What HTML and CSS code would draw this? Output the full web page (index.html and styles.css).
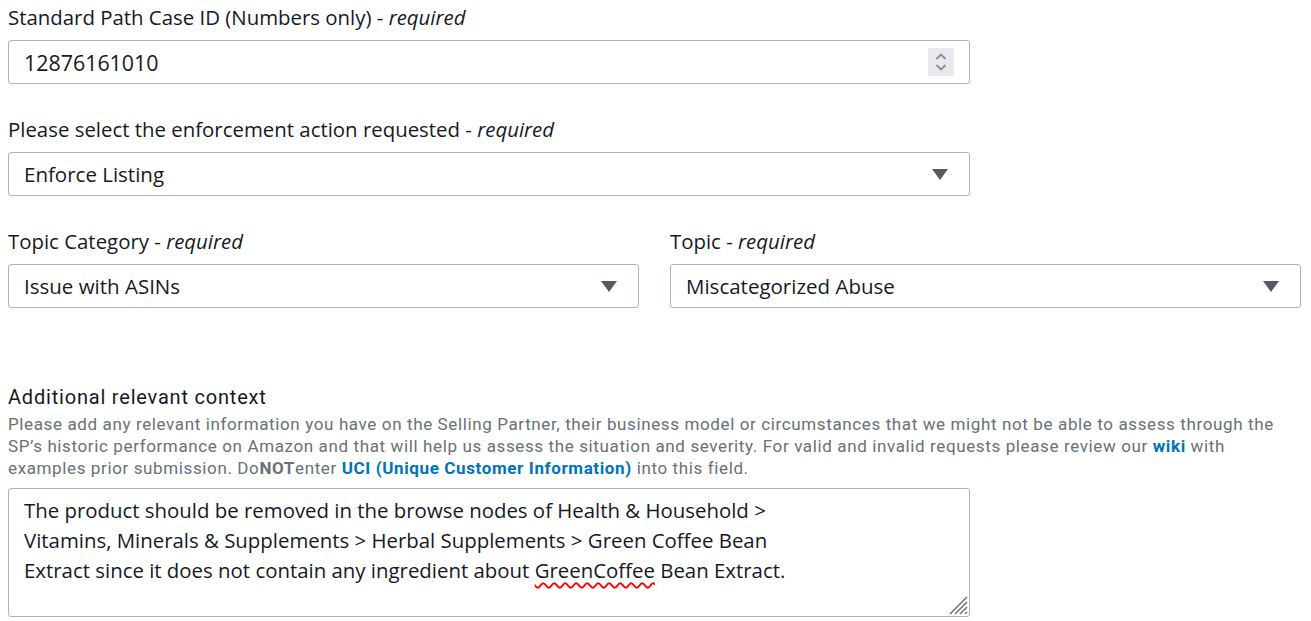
FILE: index.html
```html
<!DOCTYPE html>
<html lang="en">
<head>
<meta charset="utf-8">
<title>Enforcement request</title>
<link rel="stylesheet" href="styles.css">
</head>
<body>
<form class="form">
  <div class="field field-narrow">
    <label class="label">Standard Path Case ID (Numbers only) - <em>required</em></label>
    <div class="control">
      <span class="value value-number">12876161010</span>
      <span class="spinner">
        <svg width="14" height="22" viewBox="0 0 14 22"><path d="M2.5 8 L7 3.5 L11.5 8" fill="none" stroke="#8d8a99" stroke-width="1.8"/><path d="M2.5 14 L7 18.5 L11.5 14" fill="none" stroke="#8d8a99" stroke-width="1.8"/></svg>
      </span>
    </div>
  </div>

  <div class="field field-narrow">
    <label class="label">Please select the enforcement action requested - <em>required</em></label>
    <div class="control">
      <span class="value">Enforce Listing</span>
      <span class="caret"></span>
    </div>
  </div>

  <div class="row">
    <div class="field">
      <label class="label">Topic Category - <em>required</em></label>
      <div class="control">
        <span class="value">Issue with ASINs</span>
        <span class="caret"></span>
      </div>
    </div>
    <div class="field">
      <label class="label">Topic - <em>required</em></label>
      <div class="control">
        <span class="value">Miscategorized Abuse</span>
        <span class="caret"></span>
      </div>
    </div>
  </div>

  <div class="field context">
    <label class="label label-ember">Additional relevant context</label>
    <p class="hint">Please add any relevant information you have on the Selling Partner, their business model or circumstances that we might not be able to assess through the<br>SP’s historic performance on Amazon and that will help us assess the situation and severity. For valid and invalid requests please review our <a href="#">wiki</a> with<br>examples prior submission. Do<b>NOT</b>enter <a href="#">UCI (Unique Customer Information)</a> into this field.</p>
    <div class="textarea">
      <p>The product should be removed in the browse nodes of Health &amp; Household &gt;<br>Vitamins, Minerals &amp; Supplements &gt; Herbal Supplements &gt; Green Coffee Bean<br>Extract since it does not contain any ingredient about <span class="misspelled">GreenCoffee</span> Bean Extract.</p>
      <svg class="grip" width="22" height="22" viewBox="0 0 22 22"><path d="M21 4 L4 21 M21 9 L9 21 M21 14 L14 21 M21 19 L19 21" stroke="#6f6f6f" stroke-width="1.5"/></svg>
    </div>
  </div>
</form>
</body>
</html>
```

FILE: styles.css
```css
* { box-sizing: border-box; }

body {
  margin: 0;
  padding: 4px 8px 0 8px;
  background: #ffffff;
  color: #16191f;
  font-family: "Open Sans", "Noto Sans", sans-serif;
}

.form {
  display: flex;
  flex-direction: column;
  width: 1293px;
}

.field {
  display: flex;
  flex-direction: column;
}

.field-narrow {
  width: 962px;
  margin-bottom: 32px;
}

.label {
  font-size: 20.4px;
  line-height: 26px;
  margin-bottom: 10px;
  color: #16191f;
  white-space: nowrap;
}

.label em { font-style: italic; }

.control {
  height: 44px;
  border: 1px solid #aab7b8;
  border-radius: 3px;
  display: flex;
  align-items: center;
  justify-content: space-between;
  padding: 0 18px 0 15px;
  font-size: 20.5px;
}

.value { color: #16191f; }

.value-number { font-size: 21.4px; }

.spinner {
  width: 26px;
  height: 28px;
  background: #e9e8ed;
  display: flex;
  align-items: center;
  justify-content: center;
  margin-right: -3px;
}

.caret {
  width: 0;
  height: 0;
  border-left: 8px solid transparent;
  border-right: 8px solid transparent;
  border-top: 11px solid #545b64;
  margin-right: 3px;
}

.row {
  display: grid;
  grid-template-columns: 631px 631px;
  column-gap: 31px;
  margin-bottom: 76px;
}

.context { width: 1293px; }

.label-ember {
  font-family: Roboto, "Liberation Sans", sans-serif;
  font-size: 20px;
  letter-spacing: 0.8px;
  line-height: 26px;
  margin-bottom: 3px;
}

.hint {
  margin: 0 0 9px 0;
  font-family: Roboto, "Liberation Sans", sans-serif;
  font-size: 17px;
  letter-spacing: 0.62px;
  line-height: 22px;
  color: #687078;
  white-space: nowrap;
}

.hint a {
  color: #0073bb;
  font-weight: bold;
  text-decoration: none;
}

.hint b { font-weight: bold; }

.textarea {
  position: relative;
  width: 962px;
  height: 129px;
  border: 1px solid #aab7b8;
  border-radius: 3px;
  padding: 6px 15px;
}

.textarea p {
  margin: 0;
  font-size: 20.4px;
  line-height: 30px;
  color: #16191f;
}

.misspelled {
  text-decoration: underline wavy #ff0000;
  text-decoration-thickness: 1.5px;
  text-underline-offset: 4px;
}

.grip {
  position: absolute;
  right: 1px;
  bottom: 1px;
}
```
